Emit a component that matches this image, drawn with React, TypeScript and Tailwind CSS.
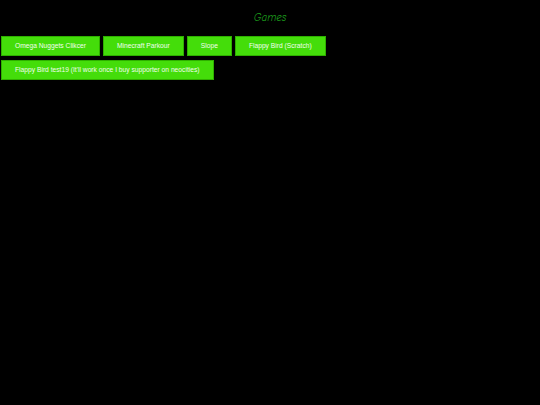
import React from 'react';

const games = [
  'Omega Nuggets Clikcer',
  'Minecraft Parkour',
  'Slope',
  'Flappy Bird (Scratch)',
  "Flappy Bird test19 (It'll work once I buy supporter on neocities)",
];

export default function App() {
  return (
    <div className="w-[540px] h-[405px] bg-black overflow-hidden">
      <h1
        className="pt-[11px] text-center text-[11px] leading-[14px] text-[#1c9c1c] italic"
        style={{ fontFamily: '"Comic Sans MS", "Comic Neue", cursive' }}
      >
        Games
      </h1>
      <div className="flex flex-wrap gap-x-[3px] gap-y-[4px] pl-[1px] pr-[210px] mt-[11px]">
        {games.map((g) => (
          <button
            key={g}
            className="h-[20px] px-[13px] bg-[#44dd0a] border border-[#2fb000] text-[#f2fdee] text-[6.7px] font-normal font-['Liberation_Sans',Arial,sans-serif] whitespace-nowrap"
          >
            {g}
          </button>
        ))}
      </div>
    </div>
  );
}
